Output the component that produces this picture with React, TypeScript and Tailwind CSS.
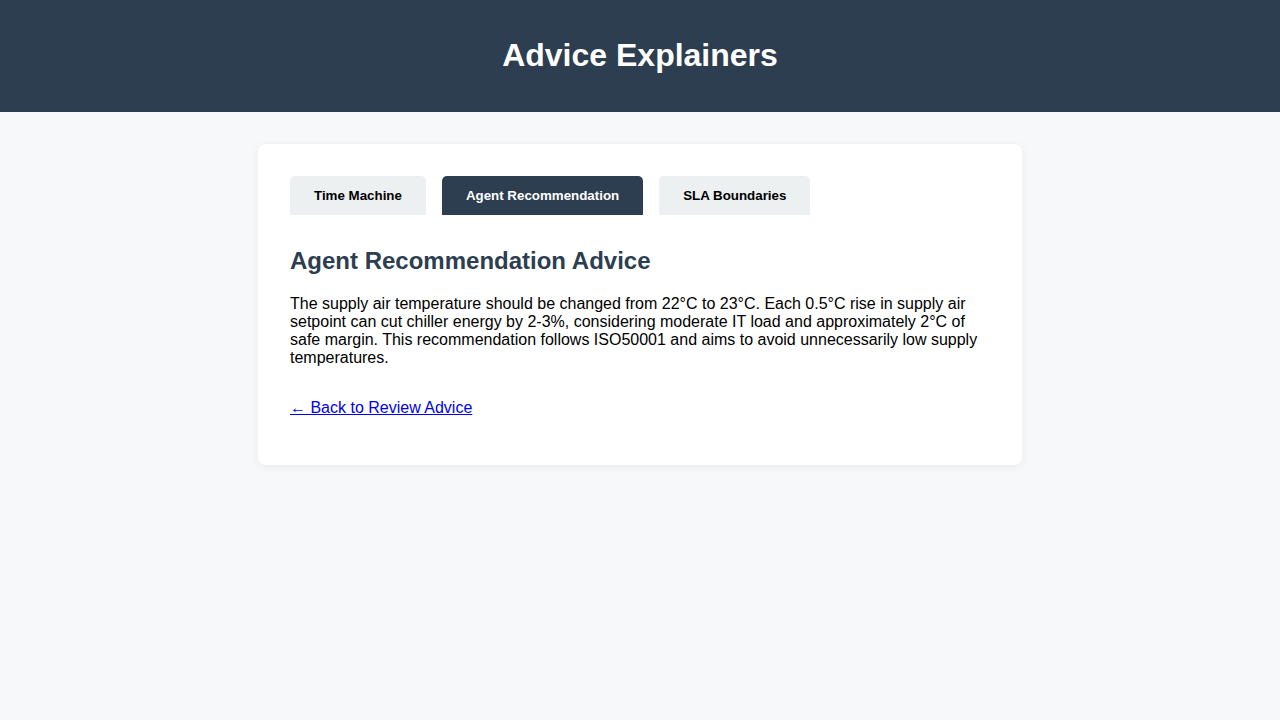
import React from "react";

export default function App() {
  const tabs = ["Time Machine", "Agent Recommendation", "SLA Boundaries"];
  const active = 1;
  return (
    <div className="min-h-screen bg-[#f7f8fa] font-['Liberation_Sans',Arial,sans-serif] text-black">
      <header className="bg-[#2c3e50] h-[112px] flex items-center justify-center pb-[2px]">
        <h1 className="text-[32px] font-bold text-white leading-none">Advice Explainers</h1>
      </header>
      <main className="flex justify-center pt-[32px]">
        <div className="w-[764px] bg-white rounded-[8px] shadow-[0_2px_10px_rgba(0,0,0,0.06)] px-[32px] pt-[32px] pb-[48px]">
          <div className="flex gap-[16px]">
            {tabs.map((t, i) => (
              <button
                key={t}
                className={`h-[39px] px-[24px] rounded-t-[5px] text-[13.333px] font-bold ${
                  i === active ? "bg-[#2c3e50] text-white" : "bg-[#ecf0f1] text-black"
                }`}
              >
                {t}
              </button>
            ))}
          </div>
          <h2 className="mt-[32px] text-[24px] font-bold text-[#2c3e50] leading-[28px]">
            Agent Recommendation Advice
          </h2>
          <p className="mt-[20px] text-[16px] leading-[18px]">
            The supply air temperature should be changed from 22°C to 23°C. Each 0.5°C rise in supply air setpoint can cut chiller energy by 2-3%, considering moderate IT load and approximately 2°C of safe margin. This recommendation follows ISO50001 and aims to avoid unnecessarily low supply temperatures.
          </p>
          <div className="mt-[32px] text-[16px] leading-[18px]">
            <a href="#" className="text-[#0000ee] underline">← Back to Review Advice</a>
          </div>
        </div>
      </main>
    </div>
  );
}
